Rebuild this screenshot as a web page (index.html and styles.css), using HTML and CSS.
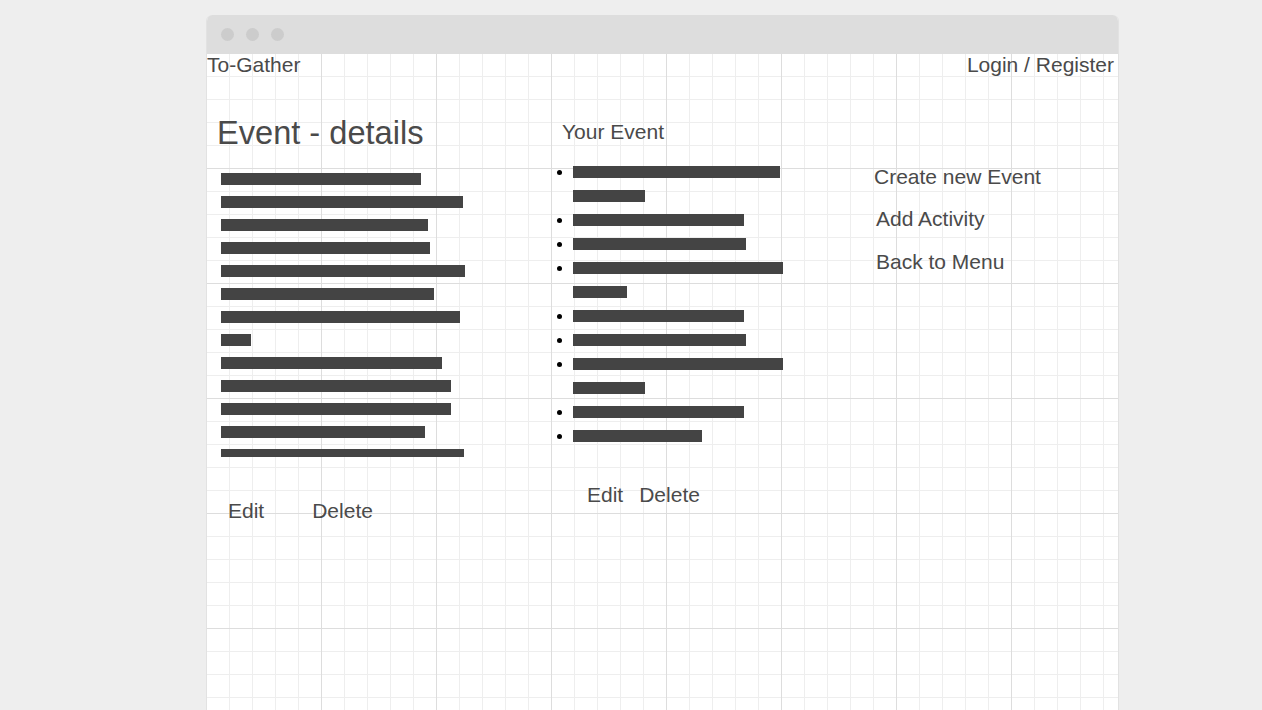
FILE: index.html
```html
<!DOCTYPE html>
<html lang="en">
<head>
<meta charset="utf-8">
<title>To-Gather - Event details</title>
<link rel="stylesheet" href="styles.css">
</head>
<body>
<div class="window">
  <div class="titlebar">
    <span class="dot"></span><span class="dot"></span><span class="dot"></span>
  </div>
  <div class="canvas">
    <header class="nav">
      <span class="brand">To-Gather</span>
      <span class="login">Login / Register</span>
    </header>
    <main class="main">
      <section class="col details">
        <h1 class="title">Event - details</h1>
        <div class="bars">
          <span class="bar" style="width:200px"></span>
          <span class="bar" style="width:242px"></span>
          <span class="bar" style="width:207px"></span>
          <span class="bar" style="width:209px"></span>
          <span class="bar" style="width:244px"></span>
          <span class="bar" style="width:213px"></span>
          <span class="bar" style="width:239px"></span>
          <span class="bar" style="width:30px"></span>
          <span class="bar" style="width:221px"></span>
          <span class="bar" style="width:230px"></span>
          <span class="bar" style="width:230px"></span>
          <span class="bar" style="width:204px"></span>
          <span class="bar bar-thin" style="width:243px"></span>
        </div>
        <div class="actions actions-left">
          <span>Edit</span><span>Delete</span>
        </div>
      </section>
      <section class="col yours">
        <h2 class="subtitle">Your Event</h2>
        <ul class="list">
          <li><div class="lines"><span class="line"><span class="bar" style="width:207px"></span></span><span class="line"><span class="bar" style="width:72px"></span></span></div></li>
          <li><div class="lines"><span class="line"><span class="bar" style="width:171px"></span></span></div></li>
          <li><div class="lines"><span class="line"><span class="bar" style="width:173px"></span></span></div></li>
          <li><div class="lines"><span class="line"><span class="bar" style="width:210px"></span></span><span class="line"><span class="bar" style="width:54px"></span></span></div></li>
          <li><div class="lines"><span class="line"><span class="bar" style="width:171px"></span></span></div></li>
          <li><div class="lines"><span class="line"><span class="bar" style="width:173px"></span></span></div></li>
          <li><div class="lines"><span class="line"><span class="bar" style="width:210px"></span></span><span class="line"><span class="bar" style="width:72px"></span></span></div></li>
          <li><div class="lines"><span class="line"><span class="bar" style="width:171px"></span></span></div></li>
          <li><div class="lines"><span class="line"><span class="bar" style="width:129px"></span></span></div></li>
        </ul>
        <div class="actions actions-right">
          <span>Edit</span><span>Delete</span>
        </div>
      </section>
      <nav class="col menu">
        <a class="menu-item first">Create new Event</a>
        <a class="menu-item second">Add Activity</a>
        <a class="menu-item">Back to Menu</a>
      </nav>
    </main>
  </div>
</div>
</body>
</html>
```

FILE: styles.css
```css
html, body {
  margin: 0;
  padding: 0;
  height: 100%;
  overflow: hidden;
}
body {
  background: #eeeeee;
  font-family: "Liberation Sans", Arial, sans-serif;
  color: #4a4a4a;
}
.window {
  margin: 15px 0 0 206px;
  width: 913px;
  height: 720px;
  border-radius: 6px 6px 0 0;
  overflow: hidden;
  box-sizing: border-box;
  border-left: 1px solid #e2e2e2;
  border-right: 1px solid #e2e2e2;
  background: #ffffff;
}
.titlebar {
  height: 38px;
  background: #dddddd;
  display: flex;
  align-items: center;
  gap: 12px;
  padding-left: 14px;
  box-sizing: border-box;
}
.dot {
  width: 13px;
  height: 13px;
  border-radius: 50%;
  background: #cccccc;
}
.canvas {
  height: 682px;
  margin-left: -1px;
  background-color: #ffffff;
  background-image:
    linear-gradient(to right, #dddddd 1px, transparent 1px),
    linear-gradient(to bottom, #dddddd 1px, transparent 1px),
    linear-gradient(to right, #eeeeee 1px, transparent 1px),
    linear-gradient(to bottom, #eeeeee 1px, transparent 1px);
  background-size: 115px 115px, 115px 115px, 23px 23px, 23px 23px;
}
.nav {
  display: flex;
  justify-content: space-between;
  font-size: 21px;
  line-height: 24px;
  padding: 0 4px 0 1px;
}
.main {
  display: grid;
  grid-template-columns: 345px 317px 1fr;
}
.col {
  display: flex;
  flex-direction: column;
  align-items: flex-start;
}
.title {
  margin: 37px 0 0 11px;
  font-size: 32.6px;
  line-height: 38px;
  font-weight: normal;
}
.bars {
  margin: 21px 0 0 15px;
  display: flex;
  flex-direction: column;
  gap: 11px;
}
.bar {
  display: block;
  height: 12px;
  background: #444444;
}
.bar-thin {
  height: 8px;
}
.actions {
  display: flex;
  font-size: 21px;
  line-height: 24px;
}
.actions-left {
  margin: 42px 0 0 22px;
  gap: 48px;
}
.subtitle {
  margin: 43px 0 0 11px;
  font-size: 21px;
  line-height: 24px;
  font-weight: normal;
}
.list {
  list-style: none;
  margin: 16px 0 0 0;
  padding: 0 0 0 5px;
}
.list li {
  display: flex;
  align-items: flex-start;
}
.list li::before {
  content: "";
  flex: none;
  width: 5px;
  height: 5px;
  border-radius: 50%;
  background: #000000;
  margin: 10px 11px 0 1px;
}
.lines {
  display: flex;
  flex-direction: column;
}
.line {
  display: block;
  height: 24px;
  padding-top: 6px;
  box-sizing: border-box;
}
.actions-right {
  margin: 35px 0 0 36px;
  gap: 16px;
}
.menu {
  padding-top: 88px;
}
.menu-item {
  font-size: 21px;
  line-height: 24px;
  margin: 0 0 19px 8px;
  color: #4a4a4a;
}
.menu-item.first {
  margin-left: 6px;
  margin-bottom: 18px;
}
```
